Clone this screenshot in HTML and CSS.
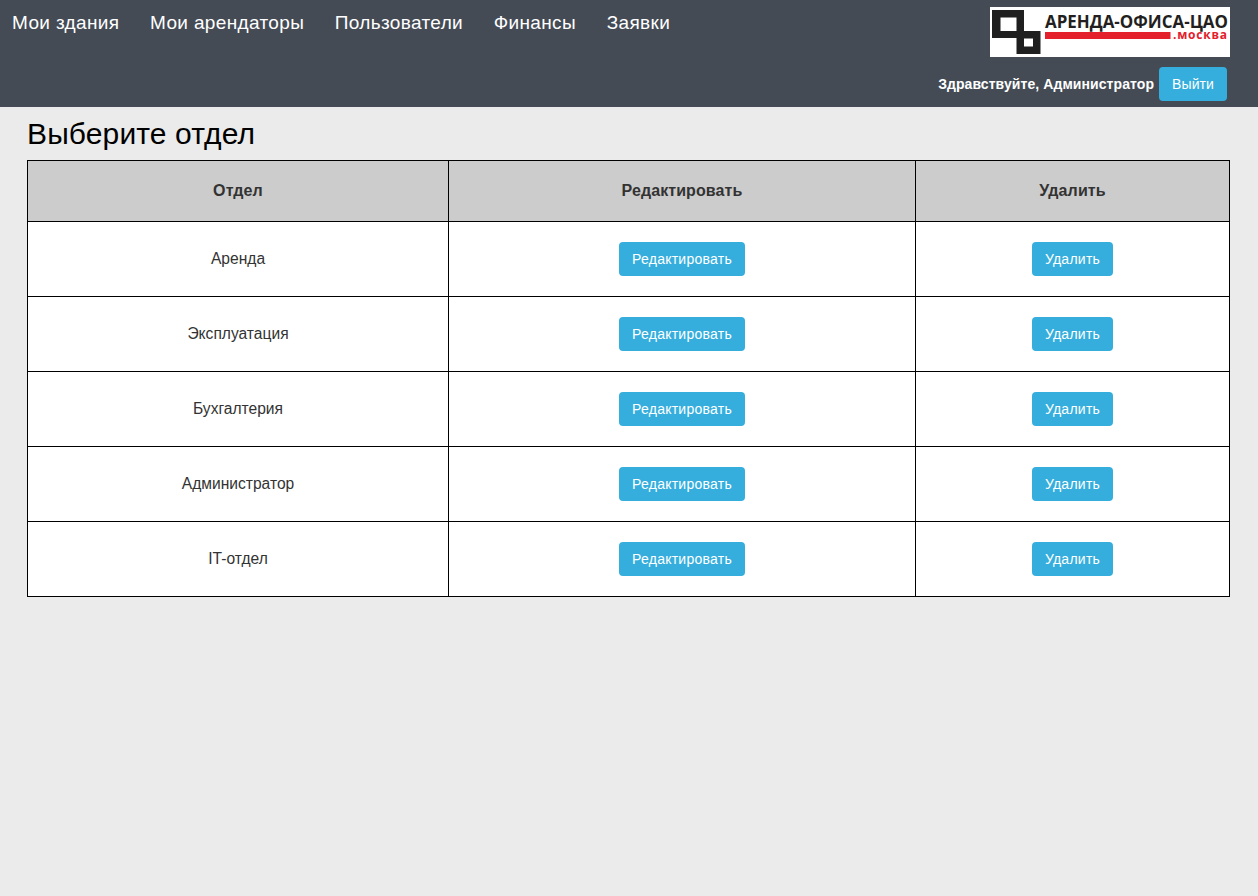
FILE: index.html
```html
<!DOCTYPE html>
<html lang="ru">
<head>
<meta charset="utf-8">
<title>Выберите отдел</title>
<link rel="stylesheet" href="styles.css">
</head>
<body>
<header class="topbar">
  <nav class="nav">
    <a href="#">Мои здания</a>
    <a href="#">Мои арендаторы</a>
    <a href="#">Пользователи</a>
    <a href="#">Финансы</a>
    <a href="#">Заявки</a>
  </nav>
  <div class="account">
    <svg class="logo" width="240" height="50" viewBox="0 0 240 50">
      <rect width="240" height="50" fill="#fff"/>
      <path fill-rule="evenodd" d="M2 3H34V24H50.500V47H26.500V31H2ZM10.500 10.500V24H26.500V10.500ZM34 31.500V39.500H43V31.500Z" fill="#1f1f1f"/>
      <text class="logo-name" x="55" y="20.500" textLength="183" lengthAdjust="spacingAndGlyphs">АРЕНДА-ОФИСА-ЦАО</text>
      <rect x="55" y="25" width="125.500" height="7" fill="#e3202c"/>
      <text class="logo-domain" x="183" y="31.500" textLength="54" lengthAdjust="spacing">.москва</text>
    </svg>
    <div class="greeting">
      <span>Здравствуйте, Администратор</span>
      <a class="btn btn-logout" href="#">Выйти</a>
    </div>
  </div>
</header>
<main class="content">
  <h1>Выберите отдел</h1>
  <table class="depts">
    <colgroup><col class="c1"><col class="c2"><col class="c3"></colgroup>
    <thead>
      <tr><th>Отдел</th><th>Редактировать</th><th>Удалить</th></tr>
    </thead>
    <tbody>
      <tr><td>Аренда</td><td><a class="btn" href="#">Редактировать</a></td><td><a class="btn" href="#">Удалить</a></td></tr>
      <tr><td>Эксплуатация</td><td><a class="btn" href="#">Редактировать</a></td><td><a class="btn" href="#">Удалить</a></td></tr>
      <tr><td>Бухгалтерия</td><td><a class="btn" href="#">Редактировать</a></td><td><a class="btn" href="#">Удалить</a></td></tr>
      <tr><td>Администратор</td><td><a class="btn" href="#">Редактировать</a></td><td><a class="btn" href="#">Удалить</a></td></tr>
      <tr><td>IT-отдел</td><td><a class="btn" href="#">Редактировать</a></td><td><a class="btn" href="#">Удалить</a></td></tr>
    </tbody>
  </table>
</main>
</body>
</html>
```

FILE: styles.css
```css
* { box-sizing: border-box; }
html, body { margin: 0; height: 100%; }
body {
  background: #ebebeb;
  color: #333;
  font-family: "Liberation Sans", Arial, sans-serif;
  font-size: 14px;
}
a { text-decoration: none; }

.topbar {
  height: 107px;
  background: #444b55;
  display: flex;
  justify-content: space-between;
  align-items: flex-start;
  padding: 7px 28px 0 12px;
}
.nav {
  display: flex;
  gap: 30.7px;
  padding-top: 5px;
}
.nav a {
  color: #fff;
  font-size: 19px;
  letter-spacing: .35px;
  line-height: 22px;
}
.account {
  display: flex;
  flex-direction: column;
  align-items: flex-end;
  gap: 10px;
}
.logo { display: block; }
.logo-name { font: bold 17px "Open Sans", sans-serif; fill: #231f20; }
.logo-domain { font: bold 12px "Open Sans", sans-serif; fill: #e3202c; }
.greeting {
  display: flex;
  align-items: center;
  gap: 5px;
  margin-right: 3px;
  color: #fff;
  font-weight: bold;
  font-size: 14px;
  letter-spacing: .08px;
}
.btn {
  display: inline-block;
  height: 34px;
  padding: 0 13px;
  border-radius: 4px;
  background: #35aedd;
  color: #fff;
  font-weight: normal;
  font-size: 14px;
  letter-spacing: .25px;
  line-height: 34px;
  vertical-align: middle;
}
.btn-logout { letter-spacing: .1px; }

.content { padding: 0 28px 0 27px; }
h1 {
  margin: 0;
  height: 53px;
  padding-top: 10px;
  color: #000;
  font-size: 30px;
  letter-spacing: .12px;
  font-weight: normal;
  line-height: 34px;
}
.depts {
  width: 1203px;
  table-layout: fixed;
  border-collapse: collapse;
  background: #fff;
}
.c1 { width: 421px; }
.c2 { width: 467px; }
.c3 { width: 314px; }
.depts th, .depts td {
  border: 1px solid #000;
  text-align: center;
  padding: 0;
}
.depts th {
  height: 61px;
  background: #cccccc;
  font-size: 16px;
  letter-spacing: .1px;
  font-weight: bold;
  color: #333;
}
.depts td { height: 75px; font-size: 15.6px; }
```
